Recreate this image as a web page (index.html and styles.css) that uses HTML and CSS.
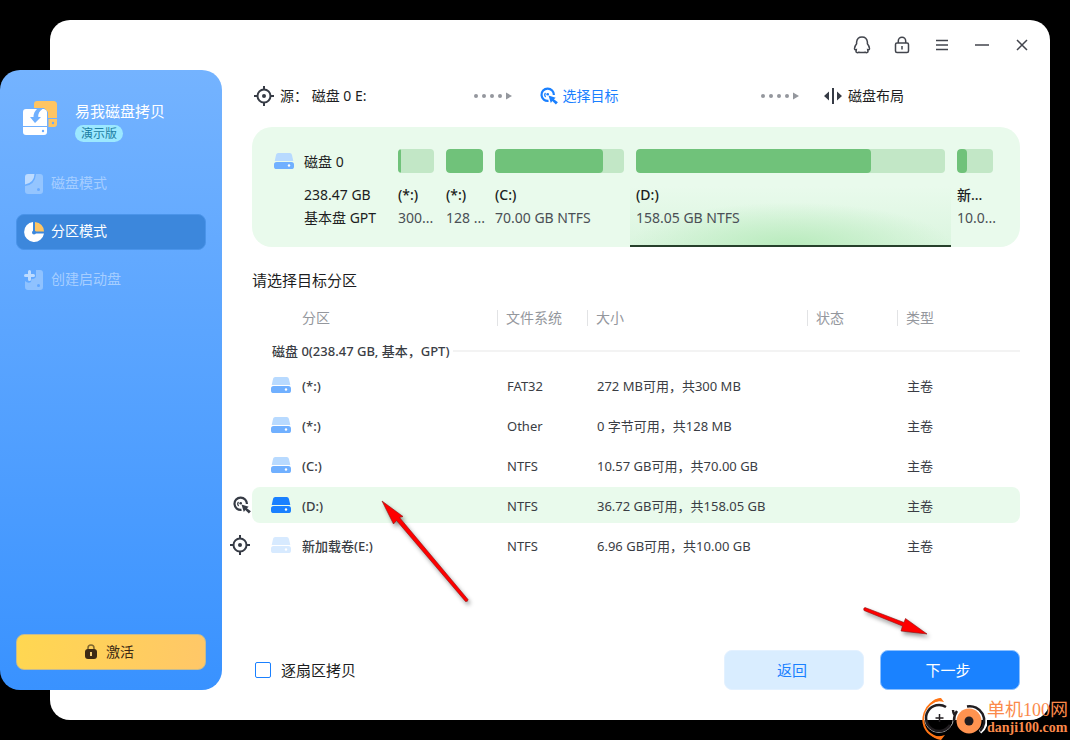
FILE: index.html
```html
<!DOCTYPE html>
<html lang="zh-CN">
<head>
<meta charset="utf-8">
<title>易我磁盘拷贝</title>
<link rel="stylesheet" href="styles.css">
</head>
<body>
<svg width="0" height="0" class="defs" aria-hidden="true">
  <symbol id="disk" viewBox="0 0 20 16">
    <path class="disk-top" d="M4.200 0h11.600q1.700 0 2.100 1.700L19.300 8H.7L2.100 1.700Q2.500 0 4.200 0z"/>
    <path class="disk-base" d="M2.600 9h14.800q2.600 0 2.600 2.600v1.800q0 2.600-2.600 2.600H2.600Q0 16 0 13.400V11.600Q0 9 2.600 9z"/>
    <circle cx="15" cy="12.500" r="1.200" fill="#fff"/>
  </symbol>
  <symbol id="source" viewBox="0 0 20 20">
    <g fill="none" stroke="currentColor" stroke-width="2">
      <circle cx="10" cy="10" r="6.500"/>
      <path d="M10 0v4M10 16v4M0 10h4M16 10h4"/>
    </g>
    <circle cx="10" cy="10" r="2" fill="currentColor"/>
  </symbol>
  <symbol id="target" viewBox="0 0 18 18">
    <path d="M8.500 13.900A6.200 6.200 0 1 1 13.900 8" fill="none" stroke="currentColor" stroke-width="2.200"/>
    <path d="M5.600 10A3 3 0 0 1 5.500 6" fill="none" stroke="currentColor" stroke-width="1.200"/>
    <circle cx="7.700" cy="7.300" r="1.300" fill="currentColor"/>
    <path d="M8.500 8.500l7.200 2.200-1.800 1.600 4 3-2 2.200-3.600-3.400-1.500 2z" fill="currentColor"/>
  </symbol>
  <symbol id="dots" viewBox="0 0 38 8">
    <g fill="#94979d"><circle cx="2" cy="4" r="2"/><circle cx="10" cy="4" r="2"/><circle cx="18" cy="4" r="2"/><circle cx="26" cy="4" r="2"/><path d="M32 .5L38 4l-6 3.500z"/></g>
  </symbol>
</svg>

<div class="app">
  <aside class="sidebar">
    <header class="brand">
      <svg class="logo" viewBox="0 0 34 34">
        <path d="M14 0h16.500Q34 0 34 3.500V17H25V11L21 7H11V3Q11 0 14 0z" fill="#ffc563"/>
        <path d="M25.500 18H34v5q0 3-3 3h-5.500z" fill="#ffc563"/>
        <circle cx="30" cy="22" r="1.200" fill="#6aacff"/>
        <path d="M3 8h11q-3.500 3-3.500 8H7l5 6 6-6h-2.700q-.5-5 4.200-8h1.500Q24 9 24 11v14H0V11Q0 8 3 8z" fill="#fff"/>
        <path d="M0 26h24v5q0 3-3 3H3q-3 0-3-3z" fill="#fff"/>
        <circle cx="20" cy="30" r="1.200" fill="#6aacff"/>
      </svg>
      <div>
        <h1 class="brand-name">易我磁盘拷贝</h1>
        <span class="badge">演示版</span>
      </div>
    </header>
    <nav class="nav">
      <a class="nav-item" href="#disk-mode">
        <svg class="nav-icon" viewBox="0 0 20 20"><path d="M12 0h4q3 0 3 3v14q0 3-3 3H4q-3 0-3-3v-5Q11 11 12 0z" fill="#94c5ff"/><path d="M4 0h6.500Q10 9 1 10.500V3Q1 0 4 0z" fill="#bddbff"/><circle cx="14.500" cy="15.500" r="1.500" fill="#68aaff"/></svg>
        磁盘模式</a>
      <a class="nav-item active" href="#partition-mode" aria-current="page">
        <svg class="nav-icon" viewBox="0 0 20 20"><path d="M9 0A10 10 0 1 0 20 11.500H9z" fill="#fff"/><path d="M11 0v9.500h9Q19.500 1 11 0z" fill="#ffc563"/><circle cx="10" cy="10.500" r="2" fill="#3c87dc"/></svg>
        分区模式</a>
      <a class="nav-item" href="#bootable">
        <svg class="nav-icon" viewBox="0 0 20 20"><path d="M12 0h4q3 0 3 3v14q0 3-3 3H4q-3 0-3-3v-6q3 3 6 1l.5-3q5 0 4.500-4z" fill="#8fc2ff"/><path d="M5.500 1.500v8M1.500 5.500h8" stroke="#bddbff" stroke-width="3" stroke-linecap="round"/><circle cx="14.500" cy="15.500" r="1.500" fill="#60a6ff"/></svg>
        创建启动盘</a>
    </nav>
    <button class="activate" type="button">
      <svg width="14" height="16" viewBox="0 0 14 16"><path d="M4 6V4a3 3 0 0 1 6 0v2" fill="none" stroke="#80672e" stroke-width="1.500"/><rect x="1" y="5" width="12" height="10" rx="3" fill="#3d2a14"/><path d="M7 8v4" stroke="#f5cf75" stroke-width="2"/></svg>
      激活</button>
  </aside>

  <main class="main">
    <div class="titlebar">
      <button type="button" aria-label="客服"><svg viewBox="0 0 20 20"><path d="M6.800 17.200Q5 18.300 4 16.900L4.300 14.600Q2.500 15.200 2.500 13.500Q2.800 11 4.600 8.800V7Q5.200 2 10 2T15.400 7V8.800Q17.200 11 17.500 13.500Q17.500 15.200 15.700 14.600L16 16.900Q15 18.300 13.200 17.200Q10 18 6.800 17.200z"/></svg></button>
      <button type="button" aria-label="激活"><svg viewBox="0 0 20 20"><rect x="3.500" y="8" width="13" height="9.500" rx="1.500"/><path d="M6.300 8V6a3.700 3.700 0 0 1 7.400 0v2M10 11v3.500"/></svg></button>
      <button type="button" aria-label="菜单"><svg viewBox="0 0 20 20"><path d="M4 5.500h12M4 10h12M4 14.500h12"/></svg></button>
      <button type="button" aria-label="最小化"><svg viewBox="0 0 20 20"><path d="M3 10h14"/></svg></button>
      <button type="button" aria-label="关闭"><svg viewBox="0 0 20 20"><path d="M5 5l10 10M15 5L5 15"/></svg></button>
    </div>

    <div class="steps">
      <div class="step"><svg width="20" height="20"><use href="#source"/></svg><span>源： 磁盘 0 E:</span></div>
      <svg class="dots first" width="38" height="8"><use href="#dots"/></svg>
      <div class="step current"><svg width="18" height="18"><use href="#target"/></svg><span>选择目标</span></div>
      <svg class="dots" width="38" height="8"><use href="#dots"/></svg>
      <div class="step last"><svg width="18" height="16" viewBox="0 0 18 16"><path d="M0 8l5-4.500v9zM18 8l-5-4.500v9zM8 0h2v16H8z" fill="#363b45"/></svg><span>磁盘布局</span></div>
    </div>

    <section class="card">
      <svg class="disk" width="20" height="16"><use href="#disk"/></svg>
      <div class="disk-info">
        <h2 class="disk-name">磁盘 0</h2>
        <p>238.47 GB</p>
        <p>基本盘 GPT</p>
      </div>
      <div class="parts">
        <div class="part"><div class="bar"><i style="width:9%"></i></div><b>(*:)</b><p>300...</p></div>
        <div class="part"><div class="bar"><i style="width:100%"></i></div><b>(*:)</b><p>128 ...</p></div>
        <div class="part"><div class="bar"><i style="width:84%"></i></div><b>(C:)</b><p>70.00 GB NTFS</p></div>
        <div class="part chosen"><div class="bar"><i style="width:76%"></i></div><b>(D:)</b><p>158.05 GB NTFS</p></div>
        <div class="part"><div class="bar"><i style="width:28%"></i></div><b>新...</b><p>10.0...</p></div>
      </div>
    </section>

    <h2 class="prompt">请选择目标分区</h2>

    <table class="list">
      <colgroup><col class="c-mark"><col class="c-part"><col class="c-fs"><col><col class="c-status"><col class="c-type"></colgroup>
      <thead>
        <tr><td></td><th scope="col">分区</th><th scope="col"><span>文件系统</span></th><th scope="col"><span>大小</span></th><th scope="col"><span>状态</span></th><th scope="col"><span>类型</span></th></tr>
      </thead>
      <tbody>
        <tr class="group"><td></td><td colspan="5"><div class="group-title">磁盘 0(238.47 GB, 基本，GPT)</div></td></tr>
        <tr><td></td><td><div class="vol"><svg class="disk" width="20" height="16"><use href="#disk"/></svg>(*:)</div></td><td>FAT32</td><td>272 MB可用，共300 MB</td><td></td><td>主卷</td></tr>
        <tr><td></td><td><div class="vol"><svg class="disk" width="20" height="16"><use href="#disk"/></svg>(*:)</div></td><td>Other</td><td>0 字节可用，共128 MB</td><td></td><td>主卷</td></tr>
        <tr><td></td><td><div class="vol"><svg class="disk" width="20" height="16"><use href="#disk"/></svg>(C:)</div></td><td>NTFS</td><td>10.57 GB可用，共70.00 GB</td><td></td><td>主卷</td></tr>
        <tr class="selected"><td class="mark"><svg width="18" height="18"><use href="#target"/></svg></td><td><div class="vol"><svg class="disk strong" width="20" height="16"><use href="#disk"/></svg>(D:)</div></td><td>NTFS</td><td>36.72 GB可用，共158.05 GB</td><td></td><td>主卷</td></tr>
        <tr><td class="mark"><svg width="20" height="20"><use href="#source"/></svg></td><td><div class="vol"><svg class="disk faint" width="20" height="16"><use href="#disk"/></svg>新加载卷(E:)</div></td><td>NTFS</td><td>6.96 GB可用，共10.00 GB</td><td></td><td>主卷</td></tr>
      </tbody>
    </table>

    <footer class="footer">
      <label class="check"><input type="checkbox">逐扇区拷贝</label>
      <button class="btn secondary" type="button">返回</button>
      <button class="btn primary" type="button">下一步</button>
    </footer>
  </main>
</div>

<svg class="arrow arrow-row" width="100" height="114" viewBox="0 0 100 114"><path d="M2 3L23 18.500 19.500 19.500 88 101.500Q88 104 85.500 103.500L16.500 22.500 13.500 26z" fill="#fe0000" stroke="#8c1010" stroke-width=".6"/></svg>
<svg class="arrow arrow-next" width="76" height="44" viewBox="0 0 76 44"><path d="M4 5.500L43 20.500 44.500 16.500 66 32 40 29 41.500 24 3 8.500Q2 6 4 5.500z" fill="#fe0000" stroke="#8c1010" stroke-width=".6"/></svg>

<div class="watermark">
  <svg width="66" height="44" viewBox="0 0 66 44">
    <path d="M20 3Q7 6 3.500 17T7 36Q12 41 19 42" fill="none" stroke="#ff7414" stroke-width="2"/>
    <path d="M9 8Q13 2 20 2L23 6Q16 4 9 8zM9 38Q15 42 24 39L20 44Q13 43 9 38z" fill="#ff7414"/>
    <circle cx="18" cy="22" r="14.500" fill="none" stroke="#fff" stroke-width=".7"/>
    <path d="M25 11A13 13 0 1 0 29 29" fill="none" stroke="#211d20" stroke-width="2.500"/>
    <path d="M18.500 18v8M14.500 22h8" stroke="#211d20" stroke-width="1.500"/>
    <path d="M32 14q.5 5 3 6M36 15q-3 4-3 10" fill="none" stroke="#211d20" stroke-width="2.500"/>
    <path d="M46 10.500A14.500 14.500 0 0 1 59 36" fill="none" stroke="#fff" stroke-width="4"/>
    <path d="M46 10.500A14.500 14.500 0 0 1 59 35" fill="none" stroke="#211d20" stroke-width="2.500"/>
    <circle cx="48" cy="25" r="12.500" fill="#ff9350"/>
    <circle cx="48" cy="25" r="4.500" fill="#211d20"/>
  </svg>
  <div class="watermark-text"><span class="wm-name">单机100网</span><span class="wm-url">danji100.com</span></div>
</div>
</body>
</html>
```
FILE: styles.css
```css
* { box-sizing: border-box; }

body {
  margin: 0;
  min-height: 100vh;
  padding: 20px 20px 20px 50px;
  display: flex;
  position: relative;
  background: #000;
  color: #1c1d21;
  font: 14px/20px "Noto Sans", "Noto Sans CJK SC", sans-serif;
}

h1, h2, p { margin: 0; font-size: inherit; font-weight: 400; }
button { border: 0; padding: 0; background: none; color: inherit; font: inherit; }
svg { flex: none; }
.defs { position: absolute; }

.app {
  flex: 1;
  display: flex;
  background: #fff;
  border-radius: 20px;
}

/* Sidebar */
.sidebar {
  flex: none;
  width: 222px;
  margin: 50px 0 30px -50px;
  padding: 30px 16px 20px;
  display: flex;
  flex-direction: column;
  border-radius: 20px;
  background: linear-gradient(#74b3ff, #3992ff);
  color: #fff;
}
.brand { display: flex; gap: 18px; padding-left: 7px; height: 66px; }
.logo { width: 34px; height: 34px; margin-top: 1px; }
.brand-name { font-size: 15px; line-height: 22px; margin-bottom: 3px; }
.badge {
  display: block;
  width: 48px;
  height: 17px;
  border-radius: 9px;
  background: #9ce8ff;
  color: #1d7fa3;
  font-size: 12px;
  line-height: 17px;
  text-align: center;
}
.nav { display: flex; flex-direction: column; gap: 12px; }
.nav-item {
  height: 36px;
  padding: 0 7px 2px;
  display: flex;
  align-items: center;
  gap: 7px;
  border: 1px solid transparent;
  border-radius: 8px;
  color: #a6ceff;
  text-decoration: none;
}
.nav-icon { width: 20px; height: 20px; margin-top: 2px; }
.nav-item.active { background: #3c87dc; border-color: #4a94ea; color: #fff; }
.activate {
  margin-top: auto;
  height: 36px;
  padding-right: 4px;
  display: flex;
  align-items: center;
  justify-content: center;
  gap: 8px;
  border: 1px solid #c3bb93;
  border-radius: 8px;
  background: linear-gradient(100deg, #ffd751, #ffc768);
  color: #3d2a14;
}

/* Main pane */
.main {
  flex: 1;
  min-width: 0;
  padding: 0 30px 30px 8px;
  display: flex;
  flex-direction: column;
}
.titlebar { display: flex; justify-content: flex-end; margin-right: -22px; height: 50px; }
.titlebar button { width: 40px; height: 50px; display: grid; place-items: center; }
.titlebar svg { width: 20px; height: 20px; fill: none; stroke: #42454d; stroke-width: 1.5; }

.steps {
  height: 57px;
  margin-left: 24px;
  padding-bottom: 6px;
  display: flex;
  align-items: center;
}
.step { display: flex; align-items: center; gap: 6px; color: #1c1d21; }
.step span { white-space: pre; }
.step svg { color: #363b45; }
.step.current, .step.current svg { color: #1a80ff; }
.step.current { gap: 4px; margin-left: 28px; }
.step.last { margin-left: 25px; margin-right: 116px; }
.dots { margin-left: auto; }
.dots.first { margin-left: 108px; }

.card {
  height: 120px;
  margin-left: 22px;
  padding: 0 21px 0 22px;
  display: flex;
  border-radius: 20px;
  background: #e9faec;
}
.card > .disk { margin: 26px 10px 0 0; }
.disk-info { width: 88px; padding-top: 24px; line-height: 23px; white-space: nowrap; }
.disk-name { line-height: 22px; margin-bottom: 10px; }
.parts {
  flex: 1;
  min-width: 0;
  display: grid;
  grid-template-columns: 48px 49px 141fr 321fr 48px;
}
.part { min-width: 0; padding: 22px 6px 0; line-height: 23px; }
.part.chosen {
  border-bottom: 2px solid #26402b;
  background: radial-gradient(ellipse 50% 36% at 50% 100%, #b9ebbd, #b9ebbd00), linear-gradient(transparent 50%, #dbf5df);
}
.part b, .part p { display: block; white-space: nowrap; }
.part b { font-weight: 500; }
.part p { color: #4a4f55; }
.bar { height: 24px; margin-bottom: 10px; border-radius: 4px; overflow: hidden; background: #c2e7c6; }
.bar i { display: block; height: 100%; border-radius: 4px; background: #70c27a; }

.disk-top { fill: var(--top, #b8daff); }
.disk-base { fill: var(--base, #70b0ff); }
.strong { --top: #1a80ff; --base: #1a80ff; }
.faint { --top: #d7eaff; --base: #d7eaff; }

.prompt { margin: 21px 0 8px 22px; font-size: 15px; line-height: 24px; }

/* Partition list */
.list {
  width: 100%;
  margin-top: -1px;
  table-layout: fixed;
  border-spacing: 0 4px;
  color: #3a3d44;
  font-size: 13px;
}
.c-mark { width: 22px; }
.c-part { width: 245px; }
.c-fs, .c-status { width: 90px; }
.c-type { width: 123px; }
.list th, .list td { height: 36px; padding: 2px 0 0 10px; text-align: left; white-space: nowrap; }
.list th { height: 32px; padding: 0 0 2px; color: #94979d; font-size: 14px; font-weight: 400; }
.list thead td { height: 32px; }
.list th:nth-child(2) { padding-left: 50px; }
.list th span { display: block; padding-left: 8px; border-left: 1px solid #e2e3e5; line-height: 16px; }
.list td:first-child { padding: 0; }
.list td:nth-child(2) { padding-left: 19px; }
.list td:last-child { padding-left: 10px; }
.list .group td { height: 24px; }
.list .group td:last-child { padding: 0 0 0 20px; }
.group-title { display: flex; align-items: center; gap: 4px; line-height: 20px; font-weight: 500; }
.group-title::after { content: ""; flex: 1; height: 2px; background: #f3f3f3; }
.vol { display: flex; align-items: center; gap: 11px; font-weight: 500; }
.vol svg { margin-bottom: 2px; }
.mark svg { display: block; color: #363b45; }
.selected .mark svg { margin-left: 3px; }
.selected td:not(.mark) { background: #e9faec; }
.selected td:nth-child(2) { border-radius: 8px 0 0 8px; }
.selected td:last-child { border-radius: 0 8px 8px 0; }

.footer { margin: auto 0 0 25px; display: flex; align-items: center; gap: 16px; }
.check { display: flex; align-items: center; gap: 10px; margin-right: auto; font-size: 15px; }
.check input {
  appearance: none;
  width: 16px;
  height: 16px;
  margin: 0;
  border: 1px solid #1a80ff;
  border-radius: 2px;
  background: #fff;
}
.btn { width: 140px; height: 40px; padding-right: 4px; border-radius: 8px; font-size: 15px; border: 1px solid #8cc0ff; }
.secondary { background: #d9edff; color: #1a80ff; border-color: #e3f1ff; }
.primary { background: #1a82ff; color: #fff; }

/* Pointers and site mark over the window */
.arrow { position: absolute; filter: drop-shadow(2px 3px 2px #0006); pointer-events: none; }
.arrow-row { left: 380px; top: 498px; }
.arrow-next { left: 861px; top: 602px; }
.watermark { position: absolute; right: 2px; bottom: 0; display: flex; pointer-events: none; }
.watermark-text { display: flex; flex-direction: column; padding-top: 4px; color: #fb8a4b; }
.wm-name { font: 18px/20px "Liberation Serif", "Noto Sans CJK SC", serif; }
.wm-url { font: bold 14px/16px "Liberation Serif", serif; }
```
